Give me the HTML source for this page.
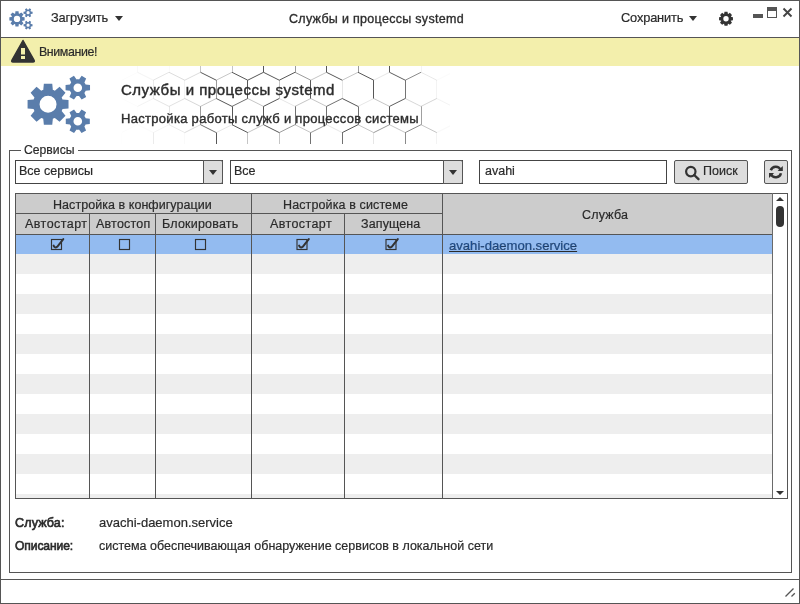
<!DOCTYPE html>
<html><head><meta charset="utf-8">
<style>
*{margin:0;padding:0;box-sizing:border-box}
html,body{width:800px;height:604px;overflow:hidden;background:#fff}
body{position:relative;font-family:"Liberation Sans",sans-serif;color:#2a2a2a;font-size:12.5px}
.a{position:absolute}
.t{position:absolute;white-space:nowrap;line-height:15px;will-change:transform;-webkit-text-stroke:0.2px #2a2a2a}
.md{-webkit-text-stroke:0.35px #333}
.hl{position:absolute;height:1px;background:#555}
.vl{position:absolute;width:1px;background:#555}
.box{position:absolute;border:1px solid #444;background:#fff}
.btn{position:absolute;border:1px solid #555;background:#ddd;border-radius:2px}
.tri{position:absolute;width:0;height:0;border-left:4.7px solid transparent;border-right:4.7px solid transparent;border-top:5px solid #333}
.row{position:absolute;left:16px;width:756px;height:20px;background:#eee}
.cb{position:absolute;width:11px;height:11px;border:1.3px solid #333}
</style></head><body>
<!-- window frame -->
<div class="a" style="left:0;top:0;width:800px;height:604px;border:1px solid #555"></div>
<!-- title bar -->
<svg class="a" style="left:0;top:0" width="800" height="37">
 <g transform="translate(-0.89,-19.9) scale(0.372)" fill="#5a7dab" fill-rule="evenodd">
  <path d="M43.25,89.88 L43.85,83.83 L52.25,83.83 L52.85,89.88 L53.19,90.00 L53.53,90.12 L53.87,90.26 L54.20,90.40 L54.53,90.55 L54.85,90.71 L59.56,86.85 L65.50,92.79 L61.64,97.50 L61.80,97.82 L61.95,98.15 L62.09,98.48 L62.23,98.82 L62.35,99.16 L62.47,99.50 L68.52,100.10 L68.52,108.50 L62.47,109.10 L62.35,109.44 L62.23,109.78 L62.09,110.12 L61.95,110.45 L61.80,110.78 L61.64,111.10 L65.50,115.81 L59.56,121.75 L54.85,117.89 L54.53,118.05 L54.20,118.20 L53.87,118.34 L53.53,118.48 L53.19,118.60 L52.85,118.72 L52.25,124.77 L43.85,124.77 L43.25,118.72 L42.91,118.60 L42.57,118.48 L42.23,118.34 L41.90,118.20 L41.57,118.05 L41.25,117.89 L36.54,121.75 L30.60,115.81 L34.46,111.10 L34.30,110.78 L34.15,110.45 L34.01,110.12 L33.87,109.78 L33.75,109.44 L33.63,109.10 L27.58,108.50 L27.58,100.10 L33.63,99.50 L33.75,99.16 L33.87,98.82 L34.01,98.48 L34.15,98.15 L34.30,97.82 L34.46,97.50 L30.60,92.79 L36.54,86.85 L41.25,90.71 L41.57,90.55 L41.90,90.40 L42.23,90.26 L42.57,90.12 L42.91,90.00ZM56.55,104.30 A8.5,8.5 0 1,0 39.55,104.30 A8.5,8.5 0 1,0 56.55,104.30Z"/><path d="M85.61,84.60 L90.03,85.10 L90.03,90.30 L85.61,90.80 L85.45,91.18 L85.27,91.54 L85.07,91.90 L84.86,92.25 L84.63,92.59 L84.39,92.91 L86.16,96.99 L81.66,99.59 L79.02,96.01 L78.61,96.06 L78.21,96.09 L77.80,96.10 L77.39,96.09 L76.99,96.06 L76.58,96.01 L73.94,99.59 L69.44,96.99 L71.21,92.91 L70.97,92.59 L70.74,92.25 L70.53,91.90 L70.33,91.54 L70.15,91.18 L69.99,90.80 L65.57,90.30 L65.57,85.10 L69.99,84.60 L70.15,84.22 L70.33,83.86 L70.53,83.50 L70.74,83.15 L70.97,82.81 L71.21,82.49 L69.44,78.41 L73.94,75.81 L76.58,79.39 L76.99,79.34 L77.39,79.31 L77.80,79.30 L78.21,79.31 L78.61,79.34 L79.02,79.39 L81.66,75.81 L86.16,78.41 L84.39,82.49 L84.63,82.81 L84.86,83.15 L85.07,83.50 L85.27,83.86 L85.45,84.22ZM82.10,87.70 A4.3,4.3 0 1,0 73.50,87.70 A4.3,4.3 0 1,0 82.10,87.70Z"/><path d="M85.61,118.20 L89.82,118.70 L89.82,123.90 L85.61,124.40 L85.45,124.78 L85.27,125.14 L85.07,125.50 L84.86,125.85 L84.63,126.19 L84.39,126.51 L86.06,130.41 L81.56,133.01 L79.02,129.61 L78.61,129.66 L78.21,129.69 L77.80,129.70 L77.39,129.69 L76.99,129.66 L76.58,129.61 L74.04,133.01 L69.54,130.41 L71.21,126.51 L70.97,126.19 L70.74,125.85 L70.53,125.50 L70.33,125.14 L70.15,124.78 L69.99,124.40 L65.78,123.90 L65.78,118.70 L69.99,118.20 L70.15,117.82 L70.33,117.46 L70.53,117.10 L70.74,116.75 L70.97,116.41 L71.21,116.09 L69.54,112.19 L74.04,109.59 L76.58,112.99 L76.99,112.94 L77.39,112.91 L77.80,112.90 L78.21,112.91 L78.61,112.94 L79.02,112.99 L81.56,109.59 L86.06,112.19 L84.39,116.09 L84.63,116.41 L84.86,116.75 L85.07,117.10 L85.27,117.46 L85.45,117.82ZM82.10,121.30 A4.3,4.3 0 1,0 73.50,121.30 A4.3,4.3 0 1,0 82.10,121.30Z"/>
 </g>
 <path d="M724.00,14.22 L724.50,11.86 L727.50,11.86 L728.00,14.22 L727.97,14.20 L727.94,14.19 L727.91,14.18 L727.88,14.17 L727.86,14.16 L727.83,14.15 L729.85,12.83 L731.97,14.95 L730.65,16.97 L730.64,16.94 L730.63,16.92 L730.62,16.89 L730.61,16.86 L730.60,16.83 L730.58,16.80 L732.94,17.30 L732.94,20.30 L730.58,20.80 L730.60,20.77 L730.61,20.74 L730.62,20.71 L730.63,20.68 L730.64,20.66 L730.65,20.63 L731.97,22.65 L729.85,24.77 L727.83,23.45 L727.86,23.44 L727.88,23.43 L727.91,23.42 L727.94,23.41 L727.97,23.40 L728.00,23.38 L727.50,25.74 L724.50,25.74 L724.00,23.38 L724.03,23.40 L724.06,23.41 L724.09,23.42 L724.12,23.43 L724.14,23.44 L724.17,23.45 L722.15,24.77 L720.03,22.65 L721.35,20.63 L721.36,20.66 L721.37,20.68 L721.38,20.71 L721.39,20.74 L721.40,20.77 L721.42,20.80 L719.06,20.30 L719.06,17.30 L721.42,16.80 L721.40,16.83 L721.39,16.86 L721.38,16.89 L721.37,16.92 L721.36,16.94 L721.35,16.97 L720.03,14.95 L722.15,12.83 L724.17,14.15 L724.14,14.16 L724.12,14.17 L724.09,14.18 L724.06,14.19 L724.03,14.20ZM728.70,18.80 A2.7,2.7 0 1,0 723.30,18.80 A2.7,2.7 0 1,0 728.70,18.80Z" fill="#333" fill-rule="evenodd"/>
 <rect x="753" y="14" width="10" height="4" fill="#555"/>
 <rect x="767.5" y="7.5" width="9" height="10" fill="none" stroke="#555" stroke-width="1"/>
 <rect x="767" y="7" width="10" height="4" fill="#555"/>
 <path d="M783.5,8.5 L791.5,16.5 M791.5,8.5 L783.5,16.5" stroke="#444" stroke-width="1.9"/>
</svg>
<div class="t" style="left:51px;top:10.1px;font-size:12.8px;letter-spacing:-0.15px">Загрузить</div>
<div class="tri" style="left:114.5px;top:16px"></div>
<div class="t md" style="left:289px;top:11.5px;font-size:12.5px;letter-spacing:0.3px">Службы и процессы systemd</div>
<div class="t" style="left:621px;top:10.1px;font-size:12.8px;letter-spacing:-0.15px">Сохранить</div>
<div class="tri" style="left:689px;top:16px"></div>
<div class="hl" style="left:0;top:37px;width:800px"></div>
<!-- warning bar -->
<div class="a" style="left:1px;top:38px;width:798px;height:28px;background:#f3efac"></div>
<svg class="a" style="left:0;top:38px" width="40" height="28">
 <path d="M23,2.5 L34,22 Q35,24 33,24 L13,24 Q11,24 12,22 Z" fill="#333" stroke="#333" stroke-width="1.5" stroke-linejoin="round"/>
 <rect x="21" y="10" width="4" height="6.5" fill="#f3efac"/>
 <rect x="21" y="18" width="4" height="3" fill="#f3efac"/>
</svg>
<div class="t" style="left:39px;top:44.6px;font-size:12.4px;letter-spacing:-0.4px">Внимание!</div>
<!-- header -->
<svg class="a" style="left:100px;top:66px" width="350" height="78">
 <g stroke="#444" stroke-width="0.9" fill="none">
<line x1="37.50" y1="-12.00" x2="37.50" y2="6.30" stroke-opacity="0.04"/>
<line x1="37.50" y1="6.30" x2="53.25" y2="14.20" stroke-opacity="0.08"/>
<line x1="37.50" y1="6.30" x2="21.75" y2="14.20" stroke-opacity="0.02"/>
<line x1="69.50" y1="-12.00" x2="69.50" y2="6.30" stroke-opacity="0.03"/>
<line x1="69.00" y1="6.30" x2="84.75" y2="14.20" stroke-opacity="0.21"/>
<line x1="69.00" y1="6.30" x2="53.25" y2="14.20" stroke-opacity="0.16"/>
<line x1="100.50" y1="-12.00" x2="100.50" y2="6.30" stroke-opacity="0.35"/>
<line x1="100.50" y1="6.30" x2="116.25" y2="14.20" stroke-opacity="1.00"/>
<line x1="100.50" y1="6.30" x2="84.75" y2="14.20" stroke-opacity="0.21"/>
<line x1="132.50" y1="-12.00" x2="132.50" y2="6.30" stroke-opacity="0.35"/>
<line x1="132.00" y1="6.30" x2="147.75" y2="14.20" stroke-opacity="1.00"/>
<line x1="132.00" y1="6.30" x2="116.25" y2="14.20" stroke-opacity="0.35"/>
<line x1="163.50" y1="-12.00" x2="163.50" y2="6.30" stroke-opacity="1.00"/>
<line x1="163.50" y1="6.30" x2="179.25" y2="14.20" stroke-opacity="1.00"/>
<line x1="163.50" y1="6.30" x2="147.75" y2="14.20" stroke-opacity="1.00"/>
<line x1="195.50" y1="-12.00" x2="195.50" y2="6.30" stroke-opacity="0.60"/>
<line x1="195.00" y1="6.30" x2="210.75" y2="14.20" stroke-opacity="0.60"/>
<line x1="195.00" y1="6.30" x2="179.25" y2="14.20" stroke-opacity="1.00"/>
<line x1="226.50" y1="-12.00" x2="226.50" y2="6.30" stroke-opacity="1.00"/>
<line x1="226.50" y1="6.30" x2="242.25" y2="14.20" stroke-opacity="1.00"/>
<line x1="226.50" y1="6.30" x2="210.75" y2="14.20" stroke-opacity="0.35"/>
<line x1="258.50" y1="-12.00" x2="258.50" y2="6.30" stroke-opacity="0.60"/>
<line x1="258.00" y1="6.30" x2="273.75" y2="14.20" stroke-opacity="1.00"/>
<line x1="258.00" y1="6.30" x2="242.25" y2="14.20" stroke-opacity="0.35"/>
<line x1="289.50" y1="-12.00" x2="289.50" y2="6.30" stroke-opacity="1.00"/>
<line x1="289.50" y1="6.30" x2="305.25" y2="14.20" stroke-opacity="0.96"/>
<line x1="289.50" y1="6.30" x2="273.75" y2="14.20" stroke-opacity="0.15"/>
<line x1="321.50" y1="-12.00" x2="321.50" y2="6.30" stroke-opacity="0.08"/>
<line x1="321.00" y1="6.30" x2="336.75" y2="14.20" stroke-opacity="0.14"/>
<line x1="321.00" y1="6.30" x2="305.25" y2="14.20" stroke-opacity="0.70"/>
<line x1="352.50" y1="6.30" x2="336.75" y2="14.20" stroke-opacity="0.03"/>
<line x1="21.50" y1="14.20" x2="21.50" y2="32.50" stroke-opacity="0.01"/>
<line x1="21.75" y1="32.50" x2="37.50" y2="40.40" stroke-opacity="0.02"/>
<line x1="53.50" y1="14.20" x2="53.50" y2="32.50" stroke-opacity="0.12"/>
<line x1="53.25" y1="32.50" x2="69.00" y2="40.40" stroke-opacity="0.16"/>
<line x1="53.25" y1="32.50" x2="37.50" y2="40.40" stroke-opacity="0.08"/>
<line x1="84.50" y1="14.20" x2="84.50" y2="32.50" stroke-opacity="0.08"/>
<line x1="84.75" y1="32.50" x2="100.50" y2="40.40" stroke-opacity="0.24"/>
<line x1="84.75" y1="32.50" x2="69.00" y2="40.40" stroke-opacity="0.18"/>
<line x1="116.50" y1="14.20" x2="116.50" y2="32.50" stroke-opacity="0.60"/>
<line x1="116.25" y1="32.50" x2="132.00" y2="40.40" stroke-opacity="1.00"/>
<line x1="116.25" y1="32.50" x2="100.50" y2="40.40" stroke-opacity="0.35"/>
<line x1="147.50" y1="14.20" x2="147.50" y2="32.50" stroke-opacity="1.00"/>
<line x1="147.75" y1="32.50" x2="163.50" y2="40.40" stroke-opacity="0.35"/>
<line x1="147.75" y1="32.50" x2="132.00" y2="40.40" stroke-opacity="0.85"/>
<line x1="179.50" y1="14.20" x2="179.50" y2="32.50" stroke-opacity="0.35"/>
<line x1="179.25" y1="32.50" x2="195.00" y2="40.40" stroke-opacity="0.15"/>
<line x1="179.25" y1="32.50" x2="163.50" y2="40.40" stroke-opacity="1.00"/>
<line x1="210.50" y1="14.20" x2="210.50" y2="32.50" stroke-opacity="1.00"/>
<line x1="210.75" y1="32.50" x2="226.50" y2="40.40" stroke-opacity="0.35"/>
<line x1="210.75" y1="32.50" x2="195.00" y2="40.40" stroke-opacity="0.35"/>
<line x1="242.50" y1="14.20" x2="242.50" y2="32.50" stroke-opacity="0.15"/>
<line x1="242.25" y1="32.50" x2="258.00" y2="40.40" stroke-opacity="1.00"/>
<line x1="242.25" y1="32.50" x2="226.50" y2="40.40" stroke-opacity="0.85"/>
<line x1="273.50" y1="14.20" x2="273.50" y2="32.50" stroke-opacity="1.00"/>
<line x1="273.75" y1="32.50" x2="289.50" y2="40.40" stroke-opacity="0.35"/>
<line x1="273.75" y1="32.50" x2="258.00" y2="40.40" stroke-opacity="0.15"/>
<line x1="305.50" y1="14.20" x2="305.50" y2="32.50" stroke-opacity="0.83"/>
<line x1="305.25" y1="32.50" x2="321.00" y2="40.40" stroke-opacity="0.24"/>
<line x1="305.25" y1="32.50" x2="289.50" y2="40.40" stroke-opacity="0.96"/>
<line x1="336.50" y1="14.20" x2="336.50" y2="32.50" stroke-opacity="0.08"/>
<line x1="336.75" y1="32.50" x2="352.50" y2="40.40" stroke-opacity="0.08"/>
<line x1="336.75" y1="32.50" x2="321.00" y2="40.40" stroke-opacity="0.25"/>
<line x1="37.50" y1="40.40" x2="37.50" y2="58.70" stroke-opacity="0.01"/>
<line x1="37.50" y1="58.70" x2="53.25" y2="66.60" stroke-opacity="0.03"/>
<line x1="37.50" y1="58.70" x2="21.75" y2="66.60" stroke-opacity="0.02"/>
<line x1="69.50" y1="40.40" x2="69.50" y2="58.70" stroke-opacity="0.16"/>
<line x1="69.00" y1="58.70" x2="84.75" y2="66.60" stroke-opacity="0.12"/>
<line x1="69.00" y1="58.70" x2="53.25" y2="66.60" stroke-opacity="0.06"/>
<line x1="100.50" y1="40.40" x2="100.50" y2="58.70" stroke-opacity="0.60"/>
<line x1="100.50" y1="58.70" x2="116.25" y2="66.60" stroke-opacity="0.85"/>
<line x1="100.50" y1="58.70" x2="84.75" y2="66.60" stroke-opacity="0.21"/>
<line x1="132.50" y1="40.40" x2="132.50" y2="58.70" stroke-opacity="1.00"/>
<line x1="132.00" y1="58.70" x2="147.75" y2="66.60" stroke-opacity="1.00"/>
<line x1="132.00" y1="58.70" x2="116.25" y2="66.60" stroke-opacity="0.15"/>
<line x1="163.50" y1="40.40" x2="163.50" y2="58.70" stroke-opacity="1.00"/>
<line x1="163.50" y1="58.70" x2="179.25" y2="66.60" stroke-opacity="1.00"/>
<line x1="163.50" y1="58.70" x2="147.75" y2="66.60" stroke-opacity="0.35"/>
<line x1="195.50" y1="40.40" x2="195.50" y2="58.70" stroke-opacity="0.85"/>
<line x1="195.00" y1="58.70" x2="210.75" y2="66.60" stroke-opacity="0.35"/>
<line x1="195.00" y1="58.70" x2="179.25" y2="66.60" stroke-opacity="0.60"/>
<line x1="226.50" y1="40.40" x2="226.50" y2="58.70" stroke-opacity="0.85"/>
<line x1="226.50" y1="58.70" x2="242.25" y2="66.60" stroke-opacity="0.15"/>
<line x1="226.50" y1="58.70" x2="210.75" y2="66.60" stroke-opacity="0.60"/>
<line x1="258.50" y1="40.40" x2="258.50" y2="58.70" stroke-opacity="0.85"/>
<line x1="258.00" y1="58.70" x2="273.75" y2="66.60" stroke-opacity="0.35"/>
<line x1="258.00" y1="58.70" x2="242.25" y2="66.60" stroke-opacity="1.00"/>
<line x1="289.50" y1="40.40" x2="289.50" y2="58.70" stroke-opacity="1.00"/>
<line x1="289.50" y1="58.70" x2="305.25" y2="66.60" stroke-opacity="0.34"/>
<line x1="289.50" y1="58.70" x2="273.75" y2="66.60" stroke-opacity="0.60"/>
<line x1="321.50" y1="40.40" x2="321.50" y2="58.70" stroke-opacity="0.57"/>
<line x1="321.00" y1="58.70" x2="336.75" y2="66.60" stroke-opacity="0.35"/>
<line x1="321.00" y1="58.70" x2="305.25" y2="66.60" stroke-opacity="0.70"/>
<line x1="352.50" y1="58.70" x2="336.75" y2="66.60" stroke-opacity="0.05"/>
<line x1="21.50" y1="66.60" x2="21.50" y2="84.90" stroke-opacity="0.01"/>
<line x1="53.50" y1="66.60" x2="53.50" y2="84.90" stroke-opacity="0.12"/>
<line x1="84.50" y1="66.60" x2="84.50" y2="84.90" stroke-opacity="0.03"/>
<line x1="116.50" y1="66.60" x2="116.50" y2="84.90" stroke-opacity="1.00"/>
<line x1="147.50" y1="66.60" x2="147.50" y2="84.90" stroke-opacity="0.35"/>
<line x1="179.50" y1="66.60" x2="179.50" y2="84.90" stroke-opacity="0.35"/>
<line x1="210.50" y1="66.60" x2="210.50" y2="84.90" stroke-opacity="0.85"/>
<line x1="242.50" y1="66.60" x2="242.50" y2="84.90" stroke-opacity="0.85"/>
<line x1="273.50" y1="66.60" x2="273.50" y2="84.90" stroke-opacity="0.15"/>
<line x1="305.50" y1="66.60" x2="305.50" y2="84.90" stroke-opacity="0.70"/>
<line x1="336.50" y1="66.60" x2="336.50" y2="84.90" stroke-opacity="0.08"/>

 </g>
</svg>
<svg class="a" style="left:0;top:0" width="100" height="140">
 <g fill="#5a7dab" fill-rule="evenodd"><path d="M43.25,89.88 L43.85,83.83 L52.25,83.83 L52.85,89.88 L53.19,90.00 L53.53,90.12 L53.87,90.26 L54.20,90.40 L54.53,90.55 L54.85,90.71 L59.56,86.85 L65.50,92.79 L61.64,97.50 L61.80,97.82 L61.95,98.15 L62.09,98.48 L62.23,98.82 L62.35,99.16 L62.47,99.50 L68.52,100.10 L68.52,108.50 L62.47,109.10 L62.35,109.44 L62.23,109.78 L62.09,110.12 L61.95,110.45 L61.80,110.78 L61.64,111.10 L65.50,115.81 L59.56,121.75 L54.85,117.89 L54.53,118.05 L54.20,118.20 L53.87,118.34 L53.53,118.48 L53.19,118.60 L52.85,118.72 L52.25,124.77 L43.85,124.77 L43.25,118.72 L42.91,118.60 L42.57,118.48 L42.23,118.34 L41.90,118.20 L41.57,118.05 L41.25,117.89 L36.54,121.75 L30.60,115.81 L34.46,111.10 L34.30,110.78 L34.15,110.45 L34.01,110.12 L33.87,109.78 L33.75,109.44 L33.63,109.10 L27.58,108.50 L27.58,100.10 L33.63,99.50 L33.75,99.16 L33.87,98.82 L34.01,98.48 L34.15,98.15 L34.30,97.82 L34.46,97.50 L30.60,92.79 L36.54,86.85 L41.25,90.71 L41.57,90.55 L41.90,90.40 L42.23,90.26 L42.57,90.12 L42.91,90.00ZM56.55,104.30 A8.5,8.5 0 1,0 39.55,104.30 A8.5,8.5 0 1,0 56.55,104.30Z"/><path d="M85.61,84.60 L90.03,85.10 L90.03,90.30 L85.61,90.80 L85.45,91.18 L85.27,91.54 L85.07,91.90 L84.86,92.25 L84.63,92.59 L84.39,92.91 L86.16,96.99 L81.66,99.59 L79.02,96.01 L78.61,96.06 L78.21,96.09 L77.80,96.10 L77.39,96.09 L76.99,96.06 L76.58,96.01 L73.94,99.59 L69.44,96.99 L71.21,92.91 L70.97,92.59 L70.74,92.25 L70.53,91.90 L70.33,91.54 L70.15,91.18 L69.99,90.80 L65.57,90.30 L65.57,85.10 L69.99,84.60 L70.15,84.22 L70.33,83.86 L70.53,83.50 L70.74,83.15 L70.97,82.81 L71.21,82.49 L69.44,78.41 L73.94,75.81 L76.58,79.39 L76.99,79.34 L77.39,79.31 L77.80,79.30 L78.21,79.31 L78.61,79.34 L79.02,79.39 L81.66,75.81 L86.16,78.41 L84.39,82.49 L84.63,82.81 L84.86,83.15 L85.07,83.50 L85.27,83.86 L85.45,84.22ZM82.10,87.70 A4.3,4.3 0 1,0 73.50,87.70 A4.3,4.3 0 1,0 82.10,87.70Z"/><path d="M85.61,118.20 L89.82,118.70 L89.82,123.90 L85.61,124.40 L85.45,124.78 L85.27,125.14 L85.07,125.50 L84.86,125.85 L84.63,126.19 L84.39,126.51 L86.06,130.41 L81.56,133.01 L79.02,129.61 L78.61,129.66 L78.21,129.69 L77.80,129.70 L77.39,129.69 L76.99,129.66 L76.58,129.61 L74.04,133.01 L69.54,130.41 L71.21,126.51 L70.97,126.19 L70.74,125.85 L70.53,125.50 L70.33,125.14 L70.15,124.78 L69.99,124.40 L65.78,123.90 L65.78,118.70 L69.99,118.20 L70.15,117.82 L70.33,117.46 L70.53,117.10 L70.74,116.75 L70.97,116.41 L71.21,116.09 L69.54,112.19 L74.04,109.59 L76.58,112.99 L76.99,112.94 L77.39,112.91 L77.80,112.90 L78.21,112.91 L78.61,112.94 L79.02,112.99 L81.56,109.59 L86.06,112.19 L84.39,116.09 L84.63,116.41 L84.86,116.75 L85.07,117.10 L85.27,117.46 L85.45,117.82ZM82.10,121.30 A4.3,4.3 0 1,0 73.50,121.30 A4.3,4.3 0 1,0 82.10,121.30Z"/></g>
</svg>
<div class="t md" style="left:121px;top:81px;font-size:15px;line-height:18px;letter-spacing:0.52px;-webkit-text-stroke:0.45px #333">Службы и процессы systemd</div>
<div class="t md" style="left:121px;top:110.6px;font-size:13px;line-height:16px;letter-spacing:0.3px;-webkit-text-stroke:0.4px #333">Настройка работы служб и процессов системы</div>
<!-- group box -->
<div class="a" style="left:9px;top:150px;width:783px;height:423px;border:1px solid #555"></div>
<div class="t" style="left:21px;top:142.5px;padding:0 3px;background:#fff;font-size:12.2px">Сервисы</div>
<!-- combos -->
<div class="box" style="left:15px;top:160px;width:208px;height:24px"></div>
<div class="btn" style="left:203px;top:160px;width:20px;height:24px;border-radius:0 2px 2px 0"></div>
<div class="tri" style="left:208.5px;top:170px"></div>
<div class="t" style="left:19px;top:164px">Все сервисы</div>
<div class="box" style="left:230px;top:160px;width:233px;height:24px"></div>
<div class="btn" style="left:443px;top:160px;width:20px;height:24px;border-radius:0 2px 2px 0"></div>
<div class="tri" style="left:448.5px;top:170px"></div>
<div class="t" style="left:234px;top:164px">Все</div>
<div class="box" style="left:479px;top:160px;width:188px;height:24px"></div>
<div class="t" style="left:485px;top:164px">avahi</div>
<div class="btn" style="left:674px;top:160px;width:74px;height:24px"></div>
<svg class="a" style="left:680px;top:162px" width="24" height="20">
 <circle cx="10.8" cy="9.6" r="4.7" fill="none" stroke="#333" stroke-width="2.2"/>
 <path d="M14.2,13 L18.5,17.2" stroke="#333" stroke-width="2.4" stroke-linecap="round"/>
</svg>
<div class="t" style="left:703px;top:164px">Поиск</div>
<div class="btn" style="left:764px;top:160px;width:24px;height:24px"></div>
<svg class="a" style="left:764px;top:160px" width="24" height="24">
 <path d="M6.8,10.24 A5.3,5.3 0 0 1 16.6,9.81" fill="none" stroke="#333" stroke-width="2.5"/>
 <path d="M16.96,13.24 A5.3,5.3 0 0 1 7,14.29" fill="none" stroke="#333" stroke-width="2.5"/>
 <path d="M13.6,10.9 L18.8,10.9 L18.8,5.9 Z" fill="#333"/>
 <path d="M5,13.1 L10.1,13.1 L5,18.1 Z" fill="#333"/>
</svg>
<!-- table -->
<div class="a" style="left:15px;top:193px;width:758px;height:42px;background:#ccc"></div>
<div class="row" style="top:235px;height:19px;background:#93bbf0"></div>
<div class="row" style="top:254px"></div>
<div class="row" style="top:294px"></div>
<div class="row" style="top:334px"></div>
<div class="row" style="top:374px"></div>
<div class="row" style="top:414px"></div>
<div class="row" style="top:454px"></div>
<div class="row" style="top:494px;height:4px"></div>
<div class="a" style="left:15px;top:193px;width:773px;height:306px;border:1px solid #555"></div>
<div class="hl" style="left:15px;top:213px;width:428px"></div>
<div class="hl" style="left:15px;top:234px;width:758px"></div>
<div class="vl" style="left:89px;top:213px;height:285px"></div>
<div class="vl" style="left:155px;top:213px;height:285px"></div>
<div class="vl" style="left:251px;top:193px;height:305px"></div>
<div class="vl" style="left:344px;top:213px;height:285px"></div>
<div class="vl" style="left:442px;top:193px;height:305px"></div>
<div class="vl" style="left:772px;top:193px;height:305px;background:#6a6a6a"></div>
<div class="a" style="left:773px;top:194px;width:14px;height:304px;background:#fff"></div>
<div class="tri" style="left:776px;top:197px;border-top:none;border-bottom:4px solid #333;border-left-width:4px;border-right-width:4px"></div>
<div class="a" style="left:776px;top:206px;width:8px;height:21px;border-radius:4px;background:#333"></div>
<div class="tri" style="left:776px;top:491px;border-top-width:4px;border-left-width:4px;border-right-width:4px"></div>
<div class="t" style="left:53px;top:197.5px;letter-spacing:0.05px">Настройка в конфигурации</div>
<div class="t" style="left:283px;top:197.5px;letter-spacing:0.12px">Настройка в системе</div>
<div class="t" style="left:582px;top:207.5px;letter-spacing:0.2px">Служба</div>
<div class="t" style="left:25px;top:216.5px;letter-spacing:0.45px">Автостарт</div>
<div class="t" style="left:96px;top:216.5px;letter-spacing:0.2px">Автостоп</div>
<div class="t" style="left:162px;top:216.5px;letter-spacing:0.2px">Блокировать</div>
<div class="t" style="left:270px;top:216.5px;letter-spacing:0.4px">Автостарт</div>
<div class="t" style="left:361px;top:216.5px;letter-spacing:0.12px">Запущена</div>
<!-- row 1 checkboxes -->
<svg class="a" style="left:0;top:230px" width="450" height="24">
 <g fill="none" stroke="#333" stroke-width="1.15">
  <rect x="51.5" y="9.5" width="10" height="10"/>
  <rect x="119.5" y="9.5" width="10" height="10"/>
  <rect x="195.5" y="9.5" width="10" height="10"/>
  <rect x="297" y="9.5" width="10" height="10"/>
  <rect x="386" y="9.5" width="10" height="10"/>
 </g>
 <g fill="none" stroke="#333" stroke-width="2" stroke-linecap="round" stroke-linejoin="round">
  <path d="M53.6,15.6 Q54.8,18.6 57.2,16.8 L63.3,9.1"/>
  <path d="M299.1,15.6 Q300.3,18.6 302.7,16.8 L308.8,9.1"/>
  <path d="M388.1,15.6 Q389.3,18.6 391.7,16.8 L397.8,9.1"/>
 </g>
</svg>
<div class="t" style="left:449px;top:237.5px;font-size:13.1px;color:#1a4f96;text-decoration:underline">avahi-daemon.service</div>
<!-- details -->
<div class="t md" style="left:15px;top:516px;font-size:12.6px;letter-spacing:0.1px;-webkit-text-stroke:0.6px #2a2a2a">Служба:</div>
<div class="t" style="left:99px;top:514.8px;font-size:13px">avachi-daemon.service</div>
<div class="t md" style="left:15px;top:539px;font-size:12.1px;letter-spacing:-0.1px;-webkit-text-stroke:0.6px #2a2a2a">Описание:</div>
<div class="t" style="left:99px;top:538.6px">система обеспечивающая обнаружение сервисов в локальной сети</div>
<!-- status bar -->
<div class="hl" style="left:0;top:579px;width:800px"></div>
<svg class="a" style="left:780px;top:584px" width="20" height="18">
 <path d="M5.5,12.5 L13.5,4.5 M11.5,12.5 L14.8,9.2" stroke="#555" stroke-width="1.3"/>
</svg>
</body></html>
